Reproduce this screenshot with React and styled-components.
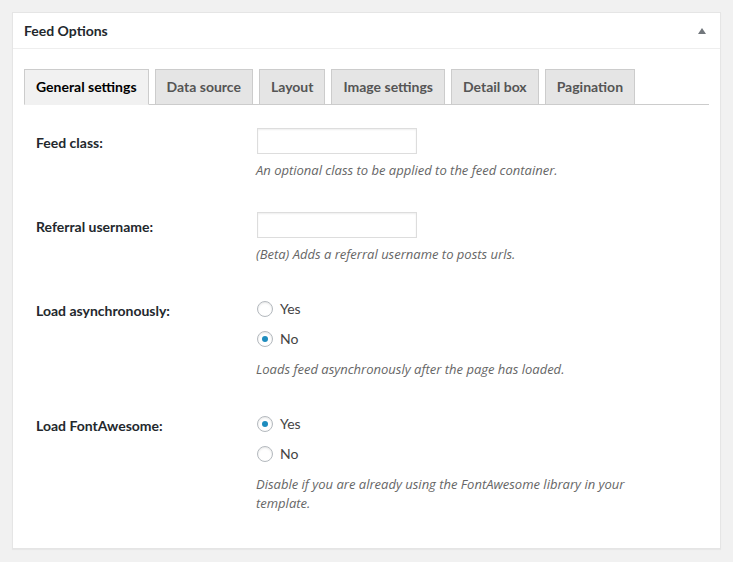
import React from 'react';
import styled, { createGlobalStyle } from 'styled-components';

const GlobalStyle = createGlobalStyle`
  html, body {
    margin: 0;
    padding: 0;
    background: #f1f1f1;
  }
  body {
    font-family: Lato, "Liberation Sans", Arial, sans-serif;
    font-size: 14px;
    color: #23282d;
  }
`;

// page and postbox
const Page = styled.div`
  padding: 12px 12px 13px 12px;
`;

const Postbox = styled.div`
  background: #fff;
  border: 1px solid #e5e5e5;
  box-shadow: 0 1px 1px rgba(0, 0, 0, 0.04);
`;

const Header = styled.div`
  display: flex;
  align-items: center;
  justify-content: space-between;
  height: 35px;
  padding: 0 14px 0 11px;
  border-bottom: 1px solid #eee;
`;

const Title = styled.h2`
  margin: 0;
  font-size: 14px;
  font-weight: 700;
  color: #23282d;
`;

const Toggle = styled.span`
  width: 0;
  height: 0;
  border-left: 4px solid transparent;
  border-right: 4px solid transparent;
  border-bottom: 6px solid #72777c;
`;

const Inside = styled.div`
  padding: 20px 11px 18px 11px;
`;

// tabs
const TabBar = styled.div`
  display: flex;
  gap: 6px;
  border-bottom: 1px solid #ccc;
  height: 35px;
  align-items: flex-end;
`;

const Tab = styled.a`
  display: block;
  box-sizing: border-box;
  height: 36px;
  margin-bottom: -1px;
  padding: 0 11px;
  line-height: 34px;
  font-size: 14px;
  font-weight: 700;
  color: ${(p) => (p.$active ? '#000' : '#555')};
  background: ${(p) => (p.$active ? '#f1f1f1' : '#e5e5e5')};
  border: 1px solid #ccc;
  border-bottom-color: ${(p) => (p.$active ? '#f1f1f1' : '#ccc')};
  text-decoration: none;
  white-space: nowrap;
`;

// form table
const FormTable = styled.table`
  margin: 8px 0 0 12px;
  border-collapse: collapse;
`;

const Th = styled.th`
  width: 200px;
  padding: 21px 10px 20px 0;
  vertical-align: top;
  text-align: left;
  font-weight: 700;
  font-size: 14px;
  line-height: 1.3;
  color: #23282d;
`;

const Td = styled.td`
  width: 420px;
  padding: 15px 10px 17px 10px;
  vertical-align: top;
  font-size: 14px;
  line-height: 1.3;
`;

const TextInput = styled.input`
  display: block;
  box-sizing: border-box;
  width: 160px;
  height: 26px;
  margin: 0 0 0 1px;
  border: 1px solid #ddd;
  box-shadow: inset 0 1px 2px rgba(0, 0, 0, 0.07);
  background: #fff;
  font-size: 14px;
`;

const Description = styled.p`
  margin: 7px 0 0 0;
  font-family: "Open Sans", Lato, sans-serif;
  font-size: 13px;
  font-style: italic;
  line-height: 19px;
  color: #666;
  max-width: 400px;
`;

const Fieldset = styled.fieldset`
  margin: 0;
  padding: 3px 0 4px 0;
  border: 0;
  display: flex;
  flex-direction: column;
  gap: 10px;
`;

const RadioLabel = styled.label`
  display: flex;
  align-items: center;
  gap: 7px;
  height: 20px;
  font-size: 14px;
  color: #444;
`;

const Radio = styled.input`
  appearance: none;
  box-sizing: border-box;
  margin: 0 0 0 1px;
  width: 16px;
  height: 16px;
  border-radius: 50%;
  border: 1px solid #b4b9be;
  box-shadow: inset 0 1px 2px rgba(0, 0, 0, 0.1);
  background: #fff;
  display: grid;
  place-items: center;

  &:checked::before {
    content: '';
    width: 6px;
    height: 6px;
    border-radius: 50%;
    background: #1e8cbe;
  }
`;

const tabs = ['General settings', 'Data source', 'Layout', 'Image settings', 'Detail box', 'Pagination'];

const RadioGroup = ({ name, value }) => (
  <Fieldset>
    <RadioLabel>
      <Radio type="radio" name={name} defaultChecked={value === 'yes'} />
      Yes
    </RadioLabel>
    <RadioLabel>
      <Radio type="radio" name={name} defaultChecked={value === 'no'} />
      No
    </RadioLabel>
  </Fieldset>
);

export default function App() {
  return (
    <Page>
      <GlobalStyle />
      <Postbox>
        <Header>
          <Title>Feed Options</Title>
          <Toggle />
        </Header>
        <Inside>
          <TabBar>
            {tabs.map((t, i) => (
              <Tab key={t} $active={i === 0} href="#">
                {t}
              </Tab>
            ))}
          </TabBar>
          <FormTable>
            <tbody>
              <tr>
                <Th>Feed class:</Th>
                <Td>
                  <TextInput type="text" />
                  <Description>An optional class to be applied to the feed container.</Description>
                </Td>
              </tr>
              <tr>
                <Th>Referral username:</Th>
                <Td>
                  <TextInput type="text" />
                  <Description>(Beta) Adds a referral username to posts urls.</Description>
                </Td>
              </tr>
              <tr>
                <Th>Load asynchronously:</Th>
                <Td>
                  <RadioGroup name="async" value="no" />
                  <Description>Loads feed asynchronously after the page has loaded.</Description>
                </Td>
              </tr>
              <tr>
                <Th>Load FontAwesome:</Th>
                <Td>
                  <RadioGroup name="fa" value="yes" />
                  <Description>
                    Disable if you are already using the FontAwesome library in your template.
                  </Description>
                </Td>
              </tr>
            </tbody>
          </FormTable>
        </Inside>
      </Postbox>
    </Page>
  );
}
